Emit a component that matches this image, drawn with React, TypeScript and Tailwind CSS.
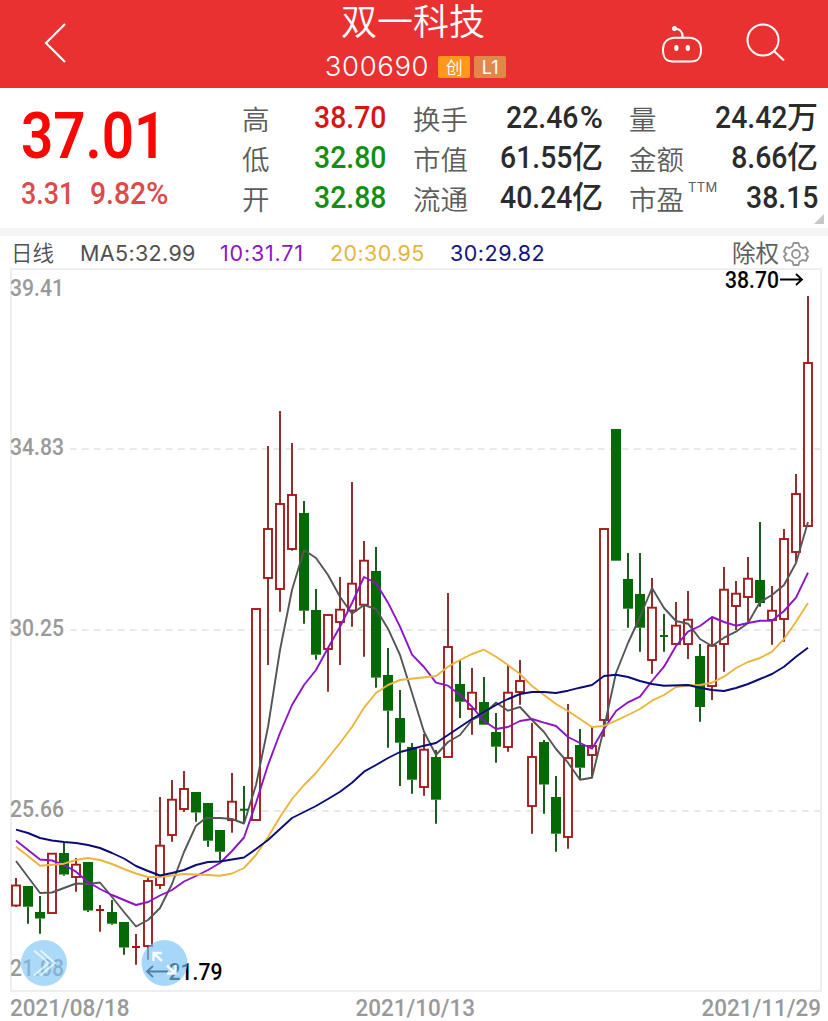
import React from "react";

const CANDLES: [string, number, number, number, number][] = [
  ["r", 878, 885.5, 905.5, 907], ["g", 886, 886, 906.7, 923.7], ["g", 896, 912, 918.5, 933.7], ["r", 853.7, 853.7, 913, 913],
  ["g", 841.7, 853, 874.5, 875.7], ["r", 858, 864.7, 877, 891.7], ["g", 862, 862, 910.5, 912], ["r", 905, 910, 910, 931.7],
  ["g", 900, 912, 923.7, 924.7], ["g", 922, 922, 947.5, 954.7], ["r", 934, 947, 947, 964.7], ["r", 877.5, 881, 946, 959.7],
  ["r", 797, 845.7, 885, 889], ["r", 780, 799.7, 835, 841.7], ["r", 771, 789, 809, 812], ["g", 792, 792, 812.5, 821.7],
  ["g", 803, 803, 840.7, 846.7], ["g", 830, 830, 851.7, 860.7], ["r", 773, 801.7, 820, 832.7], ["g", 786, 809.7, 809.7, 823],
  ["r", 609, 609, 820, 820], ["r", 446, 529, 578, 665], ["r", 411, 504, 589, 611.7], ["r", 443, 495, 549, 550.7],
  ["g", 501, 513, 610.7, 623.7], ["g", 589, 610, 654.7, 659.7], ["r", 615, 615, 649, 691.7], ["r", 577, 609.7, 622, 665],
  ["r", 482, 583.7, 610.5, 626.7], ["r", 541, 560.7, 604.7, 656.7], ["g", 547, 571, 677.6, 687.7], ["g", 648, 675, 710.7, 747.7],
  ["g", 690, 718, 742.7, 786], ["g", 743, 747, 779.7, 793.7], ["r", 734, 749.7, 787, 795.7], ["g", 750, 757, 799.7, 823.7],
  ["r", 593, 647, 757, 757], ["g", 660, 684, 701.7, 718], ["r", 668, 692.7, 709, 734.7], ["g", 677, 702, 724.7, 724.7],
  ["g", 713, 732, 746.7, 762.7], ["r", 665, 692.7, 747, 751.7], ["r", 660, 681, 692, 704.7], ["r", 723, 757, 806, 833.7],
  ["g", 740, 742, 784.5, 813.7], ["g", 776, 797, 833.7, 851.7], ["r", 704, 758, 837, 848.7], ["g", 729, 745, 767.7, 779.7],
  ["r", 727, 746, 755, 777], ["r", 529, 529, 720, 736.7], ["g", 429, 429, 560.7, 560.7], ["g", 553, 579, 608.7, 627.7],
  ["g", 553, 594, 627.7, 651.7], ["r", 578, 607.7, 660, 673.7], ["g", 614, 636, 636, 651.7], ["r", 602, 625.7, 644, 644],
  ["r", 591, 619.7, 644, 659], ["g", 644, 656, 707, 721.7], ["r", 617, 645.7, 686, 700], ["r", 567, 589.7, 644, 671.7],
  ["r", 581, 593.7, 606, 630], ["r", 557, 578.7, 597, 621.7], ["g", 522, 580, 603, 606.7], ["r", 586, 610.7, 620, 644.7],
  ["r", 529, 539, 619, 641.7], ["r", 474, 494, 552, 562], ["r", 296, 363, 526, 527],
];

const MA5 = "16,861 28,877 40,893 52,892.5 64,888 76,883.5 88,884 100,882.5 112,897 124,912 136,926.5 148,920 160,908 172,884 184,852 196,825.7 206,818 220,818 232,819 244,823.5 256,785 268,727 280,650 292,590 304,550 316,558 328,575 340,596.7 352,613.7 364,605 376,609 388,628.7 400,655 412,693 424,731.7 436,755 448,742 460,735 472,720 484,714 496,702.5 508,710.7 520,707 532,720 544,732 556,749 568,762.7 580,779.7 592,777.7 604,728 616,673 628,643 640,617 652,588 664,608 676,621 688,623.7 700,639 712,646 724,637.7 736,631.7 748,623 760,602 772,595 784,585 796,563 808,522";
const MA10 = "16,840.5 28,850 40,859.5 52,860.5 64,865 76,871.7 88,882 100,889 112,895 124,900 136,905 148,902 160,895.5 172,890 184,881.5 196,876 208,870 220,863 232,851 244,837.5 256,803 268,765 280,733 292,705 304,685 316,670 328,648 340,626.7 352,603 364,577 376,583 388,602.7 400,626.7 412,654.7 424,667 436,682.7 448,685.7 460,695 472,706.7 484,721 496,729 508,727 520,721 532,719 544,722.7 556,726 568,737 580,743 592,748.7 604,729 616,711 628,702.3 640,696.7 652,681 664,666.7 676,646 688,631.7 700,626 712,617 724,622 736,625.7 748,623 760,620.7 772,620.7 784,611 796,597.7 808,572.7";
const MA20 = "16,846.7 28,856 40,865.7 64,863.7 76,860 88,858 100,860 112,864 124,869 136,873.5 148,877 160,877 184,874 208,875 220,875.7 232,873.5 244,868 256,855 268,837 280,817 292,799 304,785 316,773 328,758 340,743 352,727 364,707.7 376,693 388,685 400,680 436,676 448,666.7 460,660 472,654 484,649.7 496,656.7 508,665 520,674 532,686 544,695 556,704 568,711 580,719 592,727 604,726 616,720.7 628,715 640,709 652,700.7 664,695 676,687 688,685.5 700,685 712,682.7 724,676.7 736,668 748,662 760,658 772,651.7 784,639 796,621.7 808,603";
const MA30 = "16,829.7 28,833 40,838 52,840.5 64,842 76,843 88,845 100,848 112,853 124,858.5 136,866 148,871 160,875.5 172,873 184,870 196,865 208,862 220,861.5 232,859.5 244,857.5 256,849 268,840 280,829 292,818 304,812 316,806 328,799 340,791.7 352,782.7 364,771.7 376,765 388,758 400,752 412,749 424,745.7 436,743 448,735 460,727 472,719 484,712 496,705 508,699 520,694 532,692 544,692 556,693 568,690.7 580,687.7 592,685 604,676 616,674.7 628,677 640,681 652,684 664,685.7 688,685 700,687.7 712,690 724,691 736,688 748,684 760,679 772,674 784,666.7 796,656.7 808,647.7";

function Candle({ i, c }: { i: number; c: [string, number, number, number, number] }) {
  const [k, hi, top, bot, lo] = c;
  const x = 16 + 12 * i;
  const up = k === "r";
  const wick = up ? "#8f3030" : "#1d5a1d";
  return (
    <g>
      {hi < top && <line x1={x} x2={x} y1={hi} y2={top} stroke={wick} strokeWidth="2" />}
      {lo > bot && <line x1={x} x2={x} y1={bot} y2={lo} stroke={wick} strokeWidth="2" />}
      {top === bot ? (
        <line x1={x - 4} x2={x + 4} y1={top} y2={top} stroke={up ? "#b01010" : "#056a05"} strokeWidth="2" />
      ) : up ? (
        <rect x={x - 4} y={top} width="8" height={bot - top} fill="#fff" stroke="#a61c1c" strokeWidth="1.9" />
      ) : (
        <rect x={x - 5} y={top} width="10" height={bot - top} fill="#056a05" />
      )}
    </g>
  );
}

function T({ x, y, w, c = "#999999", children }: { x: number; y: number; w: number; c?: string; children: string }) {
  return (
    <text x={x} y={y} textLength={w} lengthAdjust="spacingAndGlyphs" fontSize="23.2" fontWeight="500" fill={c} className="font-['Roboto',sans-serif]">
      {children}
    </text>
  );
}

function Chart() {
  return (
    <svg className="block h-[753px] w-[828px] overflow-visible" viewBox="0 268 828 753">
      {[449, 630, 811].map((y) => (
        <line key={y} x1="70" x2="820" y1={y} y2={y} stroke="#e2e2e2" strokeWidth="1.3" strokeDasharray="6.5 5.5" />
      ))}
      <rect x="11" y="269" width="810" height="722" fill="none" stroke="#eeeeee" strokeWidth="2" />
      <T x={10} y={296} w={54}>39.41</T>
      <T x={10} y={455} w={54}>34.83</T>
      <T x={10} y={636} w={54}>30.25</T>
      <T x={10} y={817} w={54}>25.66</T>
      <T x={10} y={976} w={54}>21.08</T>
      {CANDLES.map((c, i) => (
        <Candle key={i} i={i} c={c} />
      ))}
      <g fill="none" strokeWidth="1.9" strokeLinejoin="round">
        <polyline points={MA5} stroke="#555555" />
        <polyline points={MA10} stroke="#8c14c8" />
        <polyline points={MA20} stroke="#ecb53c" />
        <polyline points={MA30} stroke="#0a0a78" />
      </g>
      <T x={725} y={288} w={54} c="#000">38.70</T>
      <path d="M780 279.5h22M796 274l6 5.500l-6 5.500" fill="none" stroke="#000" strokeWidth="1.8" />
      <T x={168.5} y={980} w={54} c="#000">21.79</T>
      <path d="M168 971.500h-21M153 966l-6 5.500l6 5.500" fill="none" stroke="#000" strokeWidth="1.8" />
      <circle cx="44" cy="963" r="23" fill="#78c3f5" fillOpacity=".62" />
      <circle cx="164.500" cy="963" r="23" fill="#78c3f5" fillOpacity=".66" />
      <g fill="none" stroke="#fff" strokeWidth="1.8" strokeOpacity=".7">
        <path d="M34 950.500l14.500 12.500l-14.500 12.500M40.500 950.500l14.500 12.500l-14.500 12.500" />
        <path d="M154 953.500l8 7.500M153.500 961v-8h8.500M167 965.500l8 7.500M175.500 965v8.500h-8.500" strokeWidth="2.400" strokeOpacity=".9" />
      </g>
      <T x={10} y={1016} w={119.5}>2021/08/18</T>
      <T x={355.5} y={1016} w={119.5}>2021/10/13</T>
      <T x={701.5} y={1016} w={119.5}>2021/11/29</T>
    </svg>
  );
}

function Value({ num, unit, color = "text-[#2b2b2b]" }: { num: string; unit?: string; color?: string }) {
  return (
    <span className={`flex whitespace-nowrap font-['Roboto','Noto_Sans_CJK_SC',sans-serif] text-[31.5px] font-medium leading-[40px] ${color}`}>
      <span className="inline-block origin-right scale-x-[.9]">{num}</span>
      {unit === "%" && <span className="ml-px inline-block origin-right">%</span>}
      {unit && unit !== "%" && <span className="text-[31px]">{unit}</span>}
    </span>
  );
}

function Row({ label, sup, num, unit, color }: { label: string; sup?: string; num: string; unit?: string; color?: string }) {
  return (
    <div className="flex h-10 items-center justify-between">
      <span className="flex items-start whitespace-nowrap font-['Noto_Sans_CJK_SC',sans-serif] text-[27.5px] font-[350] leading-[40px] text-[#5c5c5c]">
        {label}
        {sup && <sup className="top-0 ml-1 mt-px font-['Inter',sans-serif] text-[13px] font-normal leading-4 tracking-[.3px]">{sup}</sup>}
      </span>
      <Value num={num} unit={unit} color={color} />
    </div>
  );
}

export default function App() {
  return (
    <div className="h-[1021px] w-[828px] overflow-hidden bg-white">
      <header className="grid h-[88px] grid-cols-[188px_1fr_188px] bg-[#e93131]">
        <svg className="h-[88px] w-[100px]" viewBox="0 0 100 88">
          <path d="M65 24L46 43l19 19" fill="none" stroke="#fff" strokeWidth="2.2" />
        </svg>
        <div className="flex flex-col items-center text-white">
          <h1 className="h-[46px] whitespace-nowrap pr-[2px] font-['Inter','Noto_Sans_CJK_SC',sans-serif] text-[36px] font-[350] leading-[44px]">双一科技</h1>
          <div className="flex h-[42px] items-center gap-1 pl-[3px]">
            <span className="mr-[5px] font-['Inter',sans-serif] text-[27.5px] font-light tracking-[.6px]">300690</span>
            <span className="flex h-[22px] w-8 items-center justify-center rounded-[2px] bg-[#ff981c] font-['Noto_Sans_CJK_SC',sans-serif] text-[17px] font-[350]">创</span>
            <span className="flex h-[22px] w-8 items-center justify-center rounded-[2px] bg-[#e0884a] font-['Inter',sans-serif] text-[18px]">L1</span>
          </div>
        </div>
        <svg className="h-[88px] w-[188px]" viewBox="640 0 188 88" fill="none" stroke="#fff" strokeWidth="2">
          <path d="M674 37.800H690C697 38.500 701 43 701 49.500C701 57 699 61.500 691 61.500H673C665 61.500 663 57 663 49.500C663 43 667 38.500 674 37.800ZM682.500 37.500C683 32 680 29 675 28.500" />
          <circle cx="674.500" cy="28.500" r="2.500" fill="#fff" stroke="none" />
          <ellipse cx="676.300" cy="48" rx="2.200" ry="2.900" fill="#fff" stroke="none" />
          <ellipse cx="687.800" cy="48" rx="2.200" ry="2.900" fill="#fff" stroke="none" />
          <circle cx="763" cy="40" r="15.500" />
          <path d="M774 51l10 9.500" />
        </svg>
      </header>

      <section className="relative flex h-[140px] pl-[21px] pr-[10px]">
        <div className="w-[221px] font-['Roboto',sans-serif]">
          <div className="mt-[8px] h-[78px] origin-left scale-x-[.87] whitespace-nowrap text-[65px] font-semibold leading-[80px] text-[#fb0505]">37.01</div>
          <div className="flex h-10 whitespace-nowrap text-[30.500px] font-medium leading-10 text-[#dd4a4a]">
            <span className="w-[69px] origin-left scale-x-[.88]">3.31</span>
            <span className="w-[56px] origin-left scale-x-[.93]">9.82</span>
            <span>%</span>
          </div>
        </div>
        <div className="w-[144px] pt-[10px]">
          <Row label="高" num="38.70" color="text-[#d91414]" />
          <Row label="低" num="32.80" color="text-[#109010]" />
          <Row label="开" num="32.88" color="text-[#109010]" />
        </div>
        <div className="ml-[27px] w-[190px] pt-[10px]">
          <Row label="换手" num="22.46" unit="%" />
          <Row label="市值" num="61.55" unit="亿" />
          <Row label="流通" num="40.24" unit="亿" />
        </div>
        <div className="ml-[26px] w-[189px] pt-[10px]">
          <Row label="量" num="24.42" unit="万" />
          <Row label="金额" num="8.66" unit="亿" />
          <Row label="市盈" sup="TTM" num="38.15" />
        </div>
        <svg className="absolute bottom-[4px] right-[4px] size-[10px]" viewBox="0 0 10 10">
          <path d="M10 0v10H0z" fill="#c8c8c8" />
        </svg>
      </section>
      <div className="h-2 bg-[#f5f5f5]" />

      <section>
        <div className="flex h-8 items-center whitespace-nowrap pl-[11px] pt-[3px] font-['Inter','Noto_Sans_CJK_SC',sans-serif] text-[21.5px] leading-[29px]">
          <span className="w-[69px] font-[350] text-[#505050]">日线</span>
          <span className="w-[140px] tracking-[.35px] text-[#505050]">MA5:32.99</span>
          <span className="w-[110px] tracking-[.8px] text-[#8c14c8]">10:31.71</span>
          <span className="w-[120px] tracking-[.4px] text-[#e3b53c]">20:30.95</span>
          <span className="w-[282px] tracking-[.5px] text-[#14147e]">30:29.82</span>
          <span className="text-[23.5px] text-[#606060]">除权</span>
          <svg className="ml-[4px] size-[26px]" viewBox="0 0 26 26" fill="none" stroke="#939393" strokeWidth="1.8" strokeLinejoin="round">
            <path d="M10.500 2h5l1 3.500l3 1.500l3.500-.8l2 4.300l-2.500 2.500l2.500 2.500l-2 4.300l-3.500-.8l-3 1.500l-1 3.500h-5l-1-3.500l-3-1.500l-3.500.8l-2-4.300l2.500-2.500l-2.500-2.500l2-4.300l3.500.8l3-1.500z" />
            <circle cx="13" cy="13" r="4" />
          </svg>
        </div>
        <Chart />
      </section>
    </div>
  );
}
